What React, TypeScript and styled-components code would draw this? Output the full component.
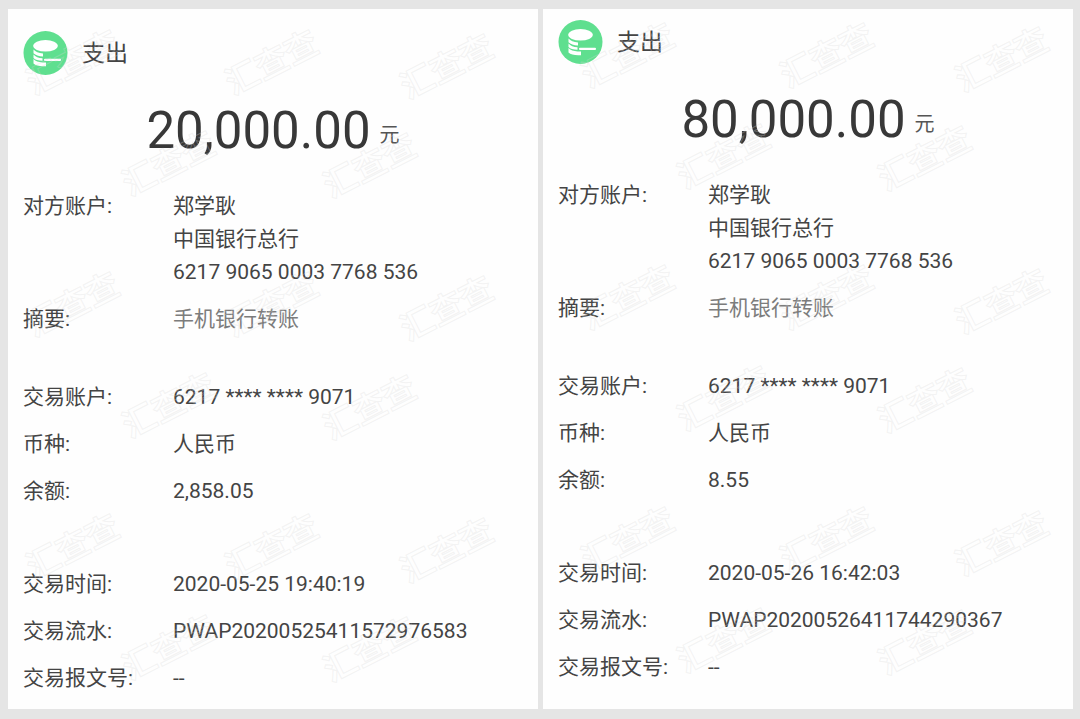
import React from 'react';
import styled, { createGlobalStyle } from 'styled-components';

const GlobalStyle = createGlobalStyle`
  * { box-sizing: border-box; }
  body {
    margin: 0;
    background: #e5e5e5;
    color: #444;
    font-family: Roboto, "Noto Sans CJK SC", sans-serif;
    font-size: 21px;
    line-height: 33px;
  }
`;

const Page = styled.main`
  display: grid;
  grid-template-columns: 1fr 1fr;
  gap: 5px;
  padding: 9px 7px 10px 8px;
`;

const Panel = styled.section<{ $top: number }>`
  position: relative;
  overflow: hidden;
  background: #fefefe;
  padding: ${(p) => p.$top}px 15px 14px;
`;

const Header = styled.header`
  display: flex;
  align-items: center;
  gap: 13px;
`;

const Title = styled.h1`
  margin: 0;
  font-size: 23px;
  font-weight: 400;
`;

const Amount = styled.p`
  display: flex;
  justify-content: center;
  align-items: flex-end;
  gap: 9px;
  margin: 26px 0 29px;
  font-size: 51px;
  line-height: 60px;
  color: #383838;
`;

const Unit = styled.span`
  font-size: 20px;
  line-height: 52px;
  color: #555;
`;

const Group = styled.dl`
  display: grid;
  gap: 14px;
  margin: 0;
`;

const Groups = styled.div`
  display: flex;
  flex-direction: column;

  ${Group}:nth-child(2) { margin-top: 45px; }
  ${Group}:nth-child(3) { margin-top: 60px; }
`;

const Row = styled.div`
  display: grid;
  grid-template-columns: 150px 1fr;
`;

const Label = styled.dt``;

const Value = styled.dd<{ $muted?: boolean }>`
  margin: 0;
  color: ${(p) => (p.$muted ? '#7c7c7c' : 'inherit')};
`;

const Line = styled.div``;

const Watermarks = styled.div<{ $x: number; $y: number }>`
  position: absolute;
  left: ${(p) => p.$x}px;
  top: ${(p) => p.$y}px;
  pointer-events: none;
  user-select: none;
`;

const Mark = styled.span<{ $x: number; $y: number }>`
  position: absolute;
  left: ${(p) => p.$x}px;
  top: ${(p) => p.$y}px;
  transform: translate(-50%, -50%) rotate(-27deg);
  font-family: "Noto Sans CJK SC", sans-serif;
  font-size: 33px;
  font-weight: 700;
  white-space: nowrap;
  color: transparent;
  -webkit-text-stroke: 1px rgba(215, 215, 215, 0.3);
`;

const CoinIcon = () => (
  <svg width="46" height="44" viewBox="0 0 46 44" aria-hidden="true">
    <circle cx="22.5" cy="22" r="22" fill="#5fdf8f" />
    <g fill="#fff">
      <ellipse cx="22.5" cy="14.8" rx="12.3" ry="5.8" />
      <path d="M10.5 18.5q3 3.6 9.500 4v3q-6.500-.2-9.500-3.200z" />
      <path d="M10.500 23.400q3 3.400 9 3.800v2.600q-6.500 0-9-2.800z" />
      <path d="M10.500 28q3 3.200 9 3.400l3.500.2v3.600q-9 .6-12.500-2.600z" />
      <rect x="21" y="27.800" width="17" height="2.200" rx="1" />
    </g>
  </svg>
);

const markSpots = [0, 242, 484].flatMap((y) => [
  [64, y + 52],
  [263, y + 52],
  [438, y + 56],
  [160, y + 153],
  [361, y + 155],
]);

type Entry = { label: string; lines: string[]; muted?: boolean };
type Receipt = { top: number; shift: [number, number]; amount: string; groups: Entry[][] };

const makeGroups = (balance: string, time: string, serial: string): Entry[][] => [
  [
    { label: '对方账户:', lines: ['郑学耿', '中国银行总行', '6217 9065 0003 7768 536'] },
    { label: '摘要:', lines: ['手机银行转账'], muted: true },
  ],
  [
    { label: '交易账户:', lines: ['6217 **** **** 9071'] },
    { label: '币种:', lines: ['人民币'] },
    { label: '余额:', lines: [balance] },
  ],
  [
    { label: '交易时间:', lines: [time] },
    { label: '交易流水:', lines: [serial] },
    { label: '交易报文号:', lines: ['--'] },
  ],
];

const receipts: Receipt[] = [
  {
    top: 22,
    shift: [0, 0],
    amount: '20,000.00',
    groups: makeGroups('2,858.05', '2020-05-25 19:40:19', 'PWAP20200525411572976583'),
  },
  {
    top: 11,
    shift: [20, -7],
    amount: '80,000.00',
    groups: makeGroups('8.55', '2020-05-26 16:42:03', 'PWAP20200526411744290367'),
  },
];

export default function App() {
  return (
    <>
      <GlobalStyle />
      <Page>
        {receipts.map((r) => (
          <Panel key={r.amount} $top={r.top}>
            <Header>
              <CoinIcon />
              <Title>支出</Title>
            </Header>
            <Amount>
              {r.amount}
              <Unit>元</Unit>
            </Amount>
            <Groups>
              {r.groups.map((group, i) => (
                <Group key={i}>
                  {group.map((e) => (
                    <Row key={e.label}>
                      <Label>{e.label}</Label>
                      <Value $muted={e.muted}>
                        {e.lines.map((line) => (
                          <Line key={line}>{line}</Line>
                        ))}
                      </Value>
                    </Row>
                  ))}
                </Group>
              ))}
            </Groups>
            <Watermarks $x={r.shift[0]} $y={r.shift[1]} aria-hidden="true">
              {markSpots.map(([x, y]) => (
                <Mark key={`${x}-${y}`} $x={x} $y={y}>汇查查</Mark>
              ))}
            </Watermarks>
          </Panel>
        ))}
      </Page>
    </>
  );
}
